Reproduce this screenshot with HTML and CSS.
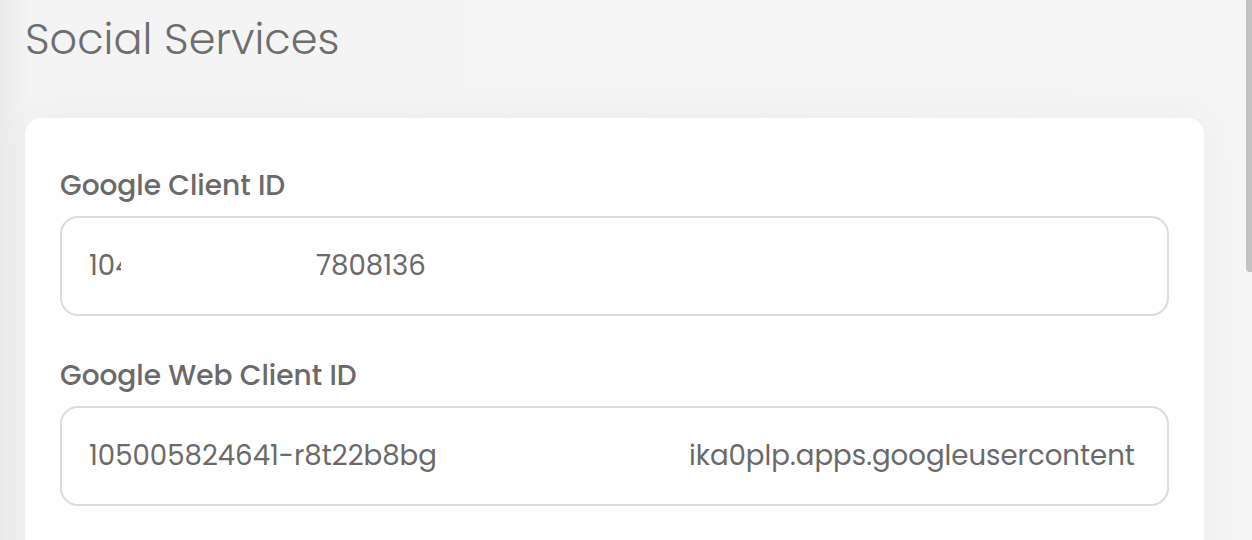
FILE: index.html
```html
<!DOCTYPE html>
<html>
<head>
<meta charset="utf-8">
<link rel="stylesheet" href="styles.css">
</head>
<body>
<div class="page">
  <h1 class="title">Social Services</h1>
  <div class="card">
    <div class="field">
      <label class="label">Google Client ID</label>
      <div class="input"><span class="clip">104</span><span class="gap g1"></span><span>7808136</span></div>
    </div>
    <div class="field">
      <label class="label">Google Web Client ID</label>
      <div class="input"><span>105005824641-r8t22b8bg</span><span class="gap g2"></span><span>ika0plp.apps.googleusercontent</span></div>
    </div>
  </div>
</div>
<div class="scrollthumb"></div>
</body>
</html>
```
FILE: styles.css
```css
html, body {
  margin: 0;
  padding: 0;
  height: 100%;
  overflow: hidden;
}
body {
  background: linear-gradient(90deg, #ebebeb 0px, #f4f4f4 30px, #f5f5f5 100%);
  font-family: "Poppins", "Open Sans", "Liberation Sans", sans-serif;
  color: #666;
}
.page {
  padding: 14px 48px 0 25px;
}
.title {
  margin: 0;
  font-weight: 300;
  font-size: 43px;
  line-height: 50px;
  color: #6e6e6e;
}
.card {
  margin-top: 54px;
  background: #fff;
  border-radius: 16px;
  box-shadow: 0 0 40px rgba(0,0,0,0.04);
  padding: 48px 35px 40px 35px;
  height: 600px;
  box-sizing: border-box;
}
.field {
  display: flex;
  flex-direction: column;
}
.field + .field {
  margin-top: 40px;
}
.label {
  font-size: 28px;
  font-weight: 500;
  line-height: 40px;
  color: #6a6a6a;
  margin-bottom: 10px;
}
.input {
  height: 100px;
  box-sizing: border-box;
  border: 2px solid #dcdcdc;
  border-radius: 18px;
  display: flex;
  align-items: center;
  padding-left: 27px;
  font-size: 27.6px;
  color: #6a6a6a;
  white-space: nowrap;
  overflow: hidden;
}
.clip {
  display: inline-block;
  width: 32px;
  overflow: hidden;
}
.gap { display: inline-block; flex: none; }
.g1 { width: 195px; }
.g2 { width: 252px; }
.scrollthumb {
  position: fixed;
  right: 0;
  top: 0;
  width: 6px;
  height: 272px;
  background: #c2c2c2;
  border-radius: 0 0 0 4px;
}
```
